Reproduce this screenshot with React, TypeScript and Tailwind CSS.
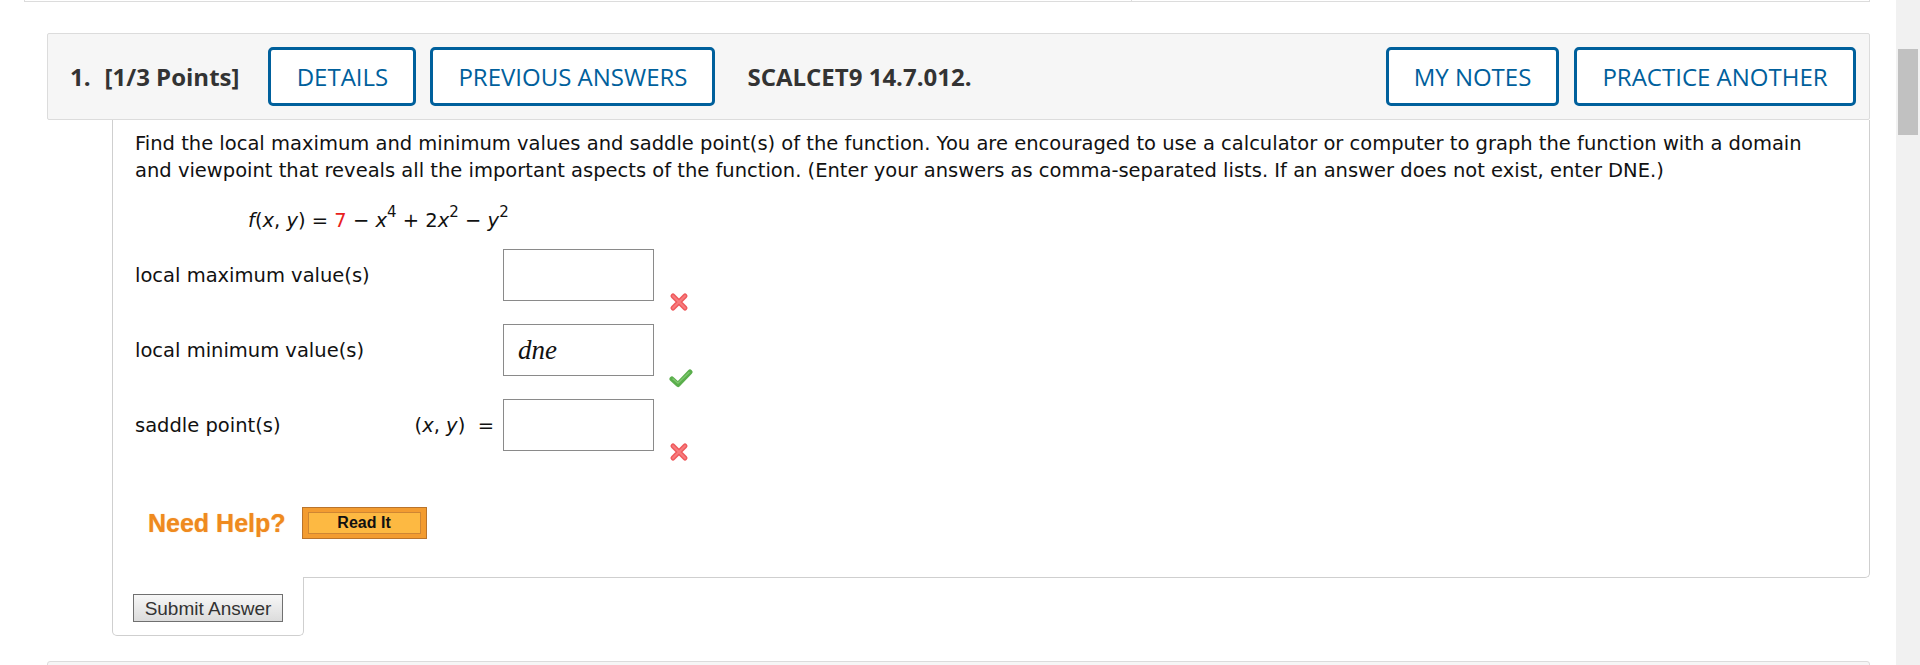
import React from 'react';

// Red "wrong" mark shown beside an answer box
const CrossMark: React.FC = () => (
  <svg width="20" height="20" viewBox="0 0 20 20">
    <path d="M4 4 L16 16 M16 4 L4 16" stroke="#ef5a5d" strokeWidth="5" strokeLinecap="round" />
    <path d="M4 4 L16 16 M16 4 L4 16" stroke="#f77c7e" strokeWidth="2" strokeLinecap="round" />
  </svg>
);

// Green "correct" mark
const CheckMark: React.FC = () => (
  <svg width="24" height="20" viewBox="0 0 24 20">
    <path d="M3 11 L9 16.5 L21 4" stroke="#5aae4c" strokeWidth="5" strokeLinecap="round" strokeLinejoin="round" fill="none" />
    <path d="M4 11 L9 15 L20 4.5" stroke="#7cc66c" strokeWidth="1.5" strokeLinecap="round" fill="none" />
  </svg>
);

const HeaderButton: React.FC<{ label: string; width: string }> = ({ label, width }) => (
  <button
    className={`${width} h-[59px] shrink-0 rounded-[5px] border-[3px] border-[#00609c] bg-white text-[24px] font-medium text-[#00609c] font-['Open_Sans',sans-serif]`}
  >
    {label}
  </button>
);

interface RowProps {
  label: string;
  prefix?: React.ReactNode;
  value?: string;
  mark: 'wrong' | 'right';
}

const AnswerRow: React.FC<RowProps> = ({ label, prefix, value, mark }) => (
  <div className="flex items-center h-[52px]">
    <div className="w-[268px] shrink-0 whitespace-nowrap">{label}</div>
    <div className="w-[100px] shrink-0 pr-[9px] text-right whitespace-nowrap">{prefix}</div>
    <div className="w-[151px] h-[52px] shrink-0 border border-[#8a8a8a] bg-white flex items-center pl-[14px]">
      {value && (
        <span className="italic text-[27px] font-['Liberation_Serif',serif] text-[#111]">{value}</span>
      )}
    </div>
    <div className={`ml-[15px] self-end ${mark === 'right' ? 'translate-y-[12px]' : 'translate-y-[11px]'}`}>
      {mark === 'right' ? <CheckMark /> : <CrossMark />}
    </div>
  </div>
);

const App: React.FC = () => {
  return (
    <div className="flex h-[665px] w-full overflow-hidden bg-white">
      <div className="flex-1 min-w-0">
        {/* bottom edge of the previous question */}
        <div className="ml-[24px] mr-[26px] h-[2px] flex">
          <div className="w-[1108px] border-b border-l border-r border-[#dcdcdc]" />
          <div className="flex-1 border-b border-r border-[#dcdcdc]" />
        </div>

        {/* question header */}
        <div className="ml-[47px] mr-[26px] mt-[31px] h-[87px] flex items-center rounded-[2px] border border-[#dcdcdc] bg-[#f6f6f6] pl-[22px] pr-[13px] font-['Open_Sans',sans-serif] text-[24px] text-[#333]">
          <span className="font-bold">1.</span>
          <span className="ml-[14px] font-bold">[1/3 Points]</span>
          <div className="ml-[29px] flex gap-[14px]">
            <HeaderButton label="DETAILS" width="w-[148px]" />
            <HeaderButton label="PREVIOUS ANSWERS" width="w-[285px]" />
          </div>
          <span className="ml-[32px] font-bold">SCALCET9 14.7.012.</span>
          <div className="ml-auto flex gap-[15px]">
            <HeaderButton label="MY NOTES" width="w-[173px]" />
            <HeaderButton label="PRACTICE ANOTHER" width="w-[282px]" />
          </div>
        </div>

        {/* question body */}
        <div className="ml-[112px] mr-[26px] border-l border-r border-b border-[#cfcfcf] rounded-br-[5px] bg-white pl-[22px] pr-[40px] pt-[10px] pb-[38px] font-['DejaVu_Sans',Verdana,sans-serif] text-[19.5px] leading-[27px] text-[#111]">
          <p>
            Find the local maximum and minimum values and saddle point(s) of the function. You are encouraged to use a
            calculator or computer to graph the function with a domain and viewpoint that reveals all the important
            aspects of the function. (Enter your answers as comma-separated lists. If an answer does not exist, enter
            DNE.)
          </p>

          <div className="ml-[113px] mt-[23px]">
            <i>f</i>(<i>x</i>, <i>y</i>) = <span className="text-[#e8211d]">7</span> − <i>x</i>
            <sup className="text-[15px] -top-[0.65em]">4</sup> + 2<i>x</i>
            <sup className="text-[15px] -top-[0.65em]">2</sup> − <i>y</i>
            <sup className="text-[15px] -top-[0.65em]">2</sup>
          </div>

          <div className="mt-[15px] flex flex-col gap-[23px]">
            <AnswerRow label="local maximum value(s)" mark="wrong" />
            <AnswerRow label="local minimum value(s)" value="dne" mark="right" />
            <AnswerRow
              label="saddle point(s)"
              prefix={
                <span>
                  (<i>x</i>, <i>y</i>)&nbsp;&nbsp;=
                </span>
              }
              mark="wrong"
            />
          </div>

          <div className="mt-[56px] ml-[13px] flex items-center h-[32px] font-['Liberation_Sans',Arial,sans-serif]">
            <span className="text-[25px] font-bold text-[#ef8a1e] [text-shadow:0_0_1px_#f5b46a]">Need Help?</span>
            <div className="ml-[16px] w-[125px] h-[32px] border border-[#b9742c] bg-[#f39c30] px-[5px] py-[4px]">
              <div className="h-full border border-[#cf8633] bg-[#fdb942] flex items-center justify-center text-[16px] font-bold leading-none text-[#111]">
                Read It
              </div>
            </div>
          </div>
        </div>

        {/* submit tab */}
        <div className="ml-[112px] -mt-[1px] w-[192px] h-[59px] border-l border-r border-b border-[#cfcfcf] rounded-b-[5px] bg-white pl-[20px] pt-[17px]">
          <button className="w-[150px] h-[28px] border border-[#707070] bg-gradient-to-b from-[#f7f7f7] to-[#dcdcdc] text-[19px] leading-none text-[#333] font-['Liberation_Sans',Arial,sans-serif]">
            Submit Answer
          </button>
        </div>

        {/* next question header (top edge) */}
        <div className="ml-[47px] mr-[26px] mt-[25px] h-[40px] rounded-t-[3px] border border-[#dcdcdc] bg-[#f6f6f6]" />
      </div>

      {/* scrollbar */}
      <div className="w-[24px] shrink-0 bg-[#f1f1f1] pt-[49px] px-[2px]">
        <div className="h-[86px] w-full bg-[#c1c1c1]" />
      </div>
    </div>
  );
};

export default App;
